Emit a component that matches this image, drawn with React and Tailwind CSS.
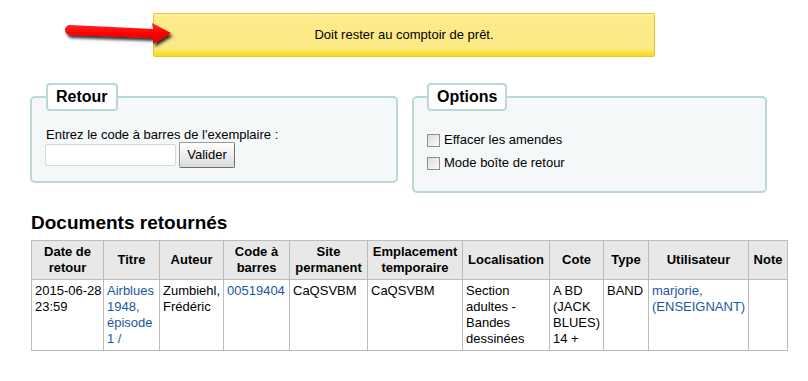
import React from "react";

function Arrow() {
  return (
    <svg
      className="absolute left-[60px] top-[18px] pointer-events-none"
      width="122"
      height="36"
      viewBox="0 0 122 36"
    >
      <defs>
        <filter id="sh" x="-20%" y="-40%" width="140%" height="200%">
          <feDropShadow dx="2" dy="3" stdDeviation="1.4" floodColor="#000" floodOpacity="0.8" />
        </filter>
        <linearGradient id="rg" x1="0" y1="0" x2="0" y2="1">
          <stop offset="0" stopColor="#ff2a2a" />
          <stop offset="0.5" stopColor="#ff0000" />
          <stop offset="1" stopColor="#e00000" />
        </linearGradient>
      </defs>
      <path
        d="M10,7 L93,11 L92,5 L111,15 L93,26 L93,20 L10,17 A5,5 0 0 1 10,7 Z"
        fill="url(#rg)"
        filter="url(#sh)"
        strokeLinejoin="round"
      />
    </svg>
  );
}

function Checkbox() {
  return (
    <span className="inline-block w-[13px] h-[13px] border border-[#8e8f8f] bg-[linear-gradient(to_bottom_right,#dcdcdc,#fbfbfb)] shrink-0" />
  );
}

const headers = [
  ["Date de retour", "w-[72px]"],
  ["Titre", "w-[56px]"],
  ["Auteur", "w-[64px]"],
  ["Code à barres", "w-[66px]"],
  ["Site permanent", "w-[78px]"],
  ["Emplacement temporaire", "w-[95px]"],
  ["Localisation", "w-[87px]"],
  ["Cote", "w-[54px]"],
  ["Type", "w-[45px]"],
  ["Utilisateur", "w-[100px]"],
  ["Note", "w-[39px]"],
];

export default function App() {
  const link = "text-[#1a58a0]";
  const td = "border border-[#bcbcbc] px-[3px] py-[3px] align-top text-left";
  return (
    <div className="relative w-[808px] h-[381px] bg-white text-black text-[13px] leading-[16px] font-['Liberation_Sans',Arial,sans-serif]">
      <div className="pt-[13px]">
        <div className="mx-auto w-[502px] h-[44px] flex items-center justify-center rounded-[2px] border border-[#e3c92e] bg-[linear-gradient(to_bottom,#fff2a8_0%,#fdea8a_8%,#fde985_82%,#f7dc10_100%)]">
          Doit rester au comptoir de prêt.
        </div>
      </div>
      <Arrow />

      <div className="flex items-start gap-[14px] pl-[30px] mt-[26px]">
        <fieldset className="w-[368px] border-2 border-[#b9d8d9] rounded-[5px] bg-[#f4f8f9] pl-[14px] pr-[14px] pt-[16px] pb-[13px]">
          <legend className="bg-white border-2 border-[#b9d8d9] rounded-[4px] px-[8px] py-[3px] text-[16px] leading-[18px] font-bold">
            Retour
          </legend>
          <div className="leading-[15px]">Entrez le code à barres de l'exemplaire :</div>
          <div className="flex items-center gap-[3px] h-[26px] -ml-[1px]">
            <input
              type="text"
              className="w-[131px] h-[22px] bg-white border border-[#d6d9da] rounded-[2px] outline-none px-1"
            />
            <button className="w-[56px] h-[26px] text-[13px] border border-[#9a9a9a] border-b-[#707070] border-r-[#707070] rounded-[2px] bg-[linear-gradient(to_bottom,#ffffff,#dcdcdc)] font-['Liberation_Sans',Arial,sans-serif]">
              Valider
            </button>
          </div>
        </fieldset>

        <fieldset className="w-[355px] border-2 border-[#b9d8d9] rounded-[5px] bg-[#f4f8f9] pl-[13px] pr-[13px] pt-[21px] pb-[20px]">
          <legend className="bg-white border-2 border-[#b9d8d9] rounded-[4px] px-[8px] py-[3px] text-[16px] leading-[18px] font-bold">
            Options
          </legend>
          <div className="flex flex-col gap-[7px]">
            <label className="flex items-center gap-[4px] h-[16px]">
              <Checkbox />
              <span>Effacer les amendes</span>
            </label>
            <label className="flex items-center gap-[4px] h-[16px]">
              <Checkbox />
              <span>Mode boîte de retour</span>
            </label>
          </div>
        </fieldset>
      </div>

      <div className="pl-[31px] mt-[19px]">
        <h1 className="text-[19px] leading-[22px] font-bold mb-[6px]">Documents retournés</h1>
        <table className="border-collapse table-fixed w-[756px]">
          <thead>
            <tr>
              {headers.map(([h, w]) => (
                <th
                  key={h}
                  className={`${w} border border-[#bcbcbc] bg-[#e8e8e8] px-[3px] py-[3px] font-bold text-center align-middle`}
                >
                  {h}
                </th>
              ))}
            </tr>
          </thead>
          <tbody>
            <tr>
              <td className={td}>
                <span className="whitespace-nowrap">2015-06-28</span> 23:59
              </td>
              <td className={td}>
                <a className={link}>Airblues 1948, épisode 1 /</a>
              </td>
              <td className={td}>Zumbiehl, Frédéric</td>
              <td className={td}>
                <a className={link}>00519404</a>
              </td>
              <td className={td}>CaQSVBM</td>
              <td className={td}>CaQSVBM</td>
              <td className={td}>Section adultes - Bandes dessinées</td>
              <td className={td}>A BD (JACK BLUES) 14 +</td>
              <td className={td}>BAND</td>
              <td className={td}>
                <a className={link}>marjorie, (ENSEIGNANT)</a>
              </td>
              <td className={td}></td>
            </tr>
          </tbody>
        </table>
      </div>
    </div>
  );
}
